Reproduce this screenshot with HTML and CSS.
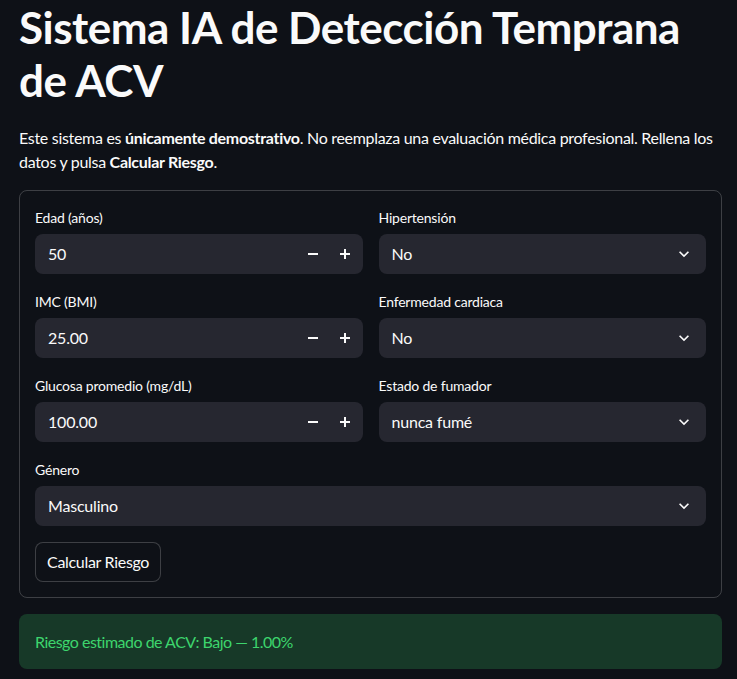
FILE: index.html
```html
<!DOCTYPE html>
<html lang="es">
<head>
    <meta charset="UTF-8">
    <meta name="viewport" content="width=device-width, initial-scale=1.0">
    <title>Sistema IA de Detección Temprana de ACV</title>
    <link rel="stylesheet" href="styles.css">
</head>
<body>
    <main class="main">
        <h1>Sistema IA de Detección Temprana de ACV</h1>
        <p class="intro">Este sistema es <strong>únicamente demostrativo</strong>. No reemplaza una evaluación médica profesional. Rellena los datos y pulsa <strong>Calcular Riesgo</strong>.</p>

        <form class="form-box" onsubmit="return false;">
            <div class="columns">
                <div class="column">
                    <div class="field">
                        <label>Edad (años)</label>
                        <div class="number-input">
                            <span class="value">50</span>
                            <button type="button" class="step"><svg width="12" height="12" viewBox="0 0 12 12"><rect x="1" y="5" width="10" height="2" fill="#fafafa"/></svg></button>
                            <button type="button" class="step"><svg width="12" height="12" viewBox="0 0 12 12"><rect x="1" y="5" width="10" height="2" fill="#fafafa"/><rect x="5" y="1" width="2" height="10" fill="#fafafa"/></svg></button>
                        </div>
                    </div>
                    <div class="field">
                        <label>IMC (BMI)</label>
                        <div class="number-input">
                            <span class="value">25.00</span>
                            <button type="button" class="step"><svg width="12" height="12" viewBox="0 0 12 12"><rect x="1" y="5" width="10" height="2" fill="#fafafa"/></svg></button>
                            <button type="button" class="step"><svg width="12" height="12" viewBox="0 0 12 12"><rect x="1" y="5" width="10" height="2" fill="#fafafa"/><rect x="5" y="1" width="2" height="10" fill="#fafafa"/></svg></button>
                        </div>
                    </div>
                    <div class="field">
                        <label>Glucosa promedio (mg/dL)</label>
                        <div class="number-input">
                            <span class="value">100.00</span>
                            <button type="button" class="step"><svg width="12" height="12" viewBox="0 0 12 12"><rect x="1" y="5" width="10" height="2" fill="#fafafa"/></svg></button>
                            <button type="button" class="step"><svg width="12" height="12" viewBox="0 0 12 12"><rect x="1" y="5" width="10" height="2" fill="#fafafa"/><rect x="5" y="1" width="2" height="10" fill="#fafafa"/></svg></button>
                        </div>
                    </div>
                </div>
                <div class="column">
                    <div class="field">
                        <label>Hipertensión</label>
                        <div class="select">
                            <span class="value">No</span>
                            <svg class="chevron" width="20" height="20" viewBox="0 0 24 24"><path d="M16.59 8.59L12 13.17 7.41 8.59 6 10l6 6 6-6z" fill="#fafafa"/></svg>
                        </div>
                    </div>
                    <div class="field">
                        <label>Enfermedad cardiaca</label>
                        <div class="select">
                            <span class="value">No</span>
                            <svg class="chevron" width="20" height="20" viewBox="0 0 24 24"><path d="M16.59 8.59L12 13.17 7.41 8.59 6 10l6 6 6-6z" fill="#fafafa"/></svg>
                        </div>
                    </div>
                    <div class="field">
                        <label>Estado de fumador</label>
                        <div class="select">
                            <span class="value">nunca fumé</span>
                            <svg class="chevron" width="20" height="20" viewBox="0 0 24 24"><path d="M16.59 8.59L12 13.17 7.41 8.59 6 10l6 6 6-6z" fill="#fafafa"/></svg>
                        </div>
                    </div>
                </div>
            </div>

            <div class="field">
                <label>Género</label>
                <div class="select">
                    <span class="value">Masculino</span>
                    <svg class="chevron" width="20" height="20" viewBox="0 0 24 24"><path d="M16.59 8.59L12 13.17 7.41 8.59 6 10l6 6 6-6z" fill="#fafafa"/></svg>
                </div>
            </div>

            <div class="actions">
                <button type="submit" class="submit-btn">Calcular Riesgo</button>
            </div>
        </form>

        <div class="alert-success">Riesgo estimado de ACV: Bajo — 1.00%</div>
    </main>
</body>
</html>
```

FILE: styles.css
```css
:root {
    --background-color: #0e1117;
    --widget-color: #262730;
    --text-color: #fafafa;
    --border-color: rgba(250, 250, 250, 0.2);
    --success-bg: #173928;
    --success-text: #3dd56d;
}

* {
    box-sizing: border-box;
    margin: 0;
    padding: 0;
}

body {
    font-family: "Lato", "Open Sans", sans-serif;
    background-color: var(--background-color);
    color: var(--text-color);
    letter-spacing: -0.2px;
    min-height: 100vh;
}

.main {
    padding: 0 15px 10px 19px;
}

h1 {
    font-size: 44px;
    font-weight: 700;
    line-height: 1.2;
    letter-spacing: -0.5px;
    padding: 1px 0 19px;
}

.intro {
    font-size: 16px;
    line-height: 24px;
    letter-spacing: -0.3px;
    margin-bottom: 16px;
}

.intro strong {
    font-weight: 700;
}

.form-box {
    border: 1px solid var(--border-color);
    border-radius: 8px;
    padding: 15px;
    display: flex;
    flex-direction: column;
    gap: 16px;
}

.columns {
    display: grid;
    grid-template-columns: 1fr 1fr;
    gap: 16px;
}

.column {
    display: flex;
    flex-direction: column;
    gap: 16px;
}

.field label {
    display: flex;
    align-items: center;
    height: 24px;
    margin-bottom: 4px;
    font-size: 14px;
}

.number-input,
.select {
    display: flex;
    align-items: center;
    height: 40px;
    background-color: var(--widget-color);
    border-radius: 8px;
    font-size: 16px;
}

.number-input .value,
.select .value {
    flex: 1;
    padding-left: 13px;
}

.step {
    width: 32px;
    height: 40px;
    background: none;
    border: none;
    display: flex;
    align-items: center;
    justify-content: center;
}

.step:last-child {
    margin-right: 2px;
}

.chevron {
    margin-right: 12px;
}

.submit-btn {
    font-family: inherit;
    font-size: 16px;
    letter-spacing: -0.3px;
    color: var(--text-color);
    background-color: var(--background-color);
    border: 1px solid var(--border-color);
    border-radius: 8px;
    height: 40px;
    padding: 0 11px;
}

.alert-success {
    margin-top: 16px;
    background-color: var(--success-bg);
    color: var(--success-text);
    border-radius: 8px;
    padding: 16px;
    font-size: 16px;
    line-height: 23px;
    letter-spacing: -0.5px;
}
```
